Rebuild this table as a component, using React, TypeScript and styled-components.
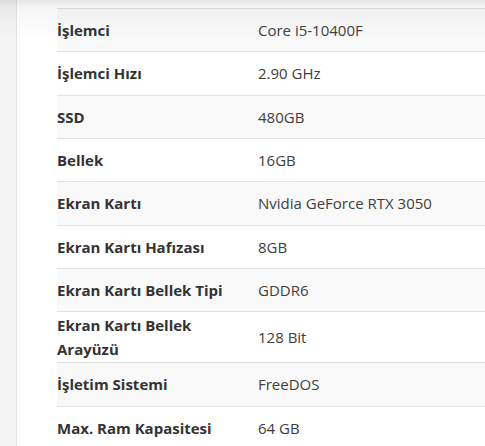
import React from "react";
import styled, { createGlobalStyle } from "styled-components";

const Global = createGlobalStyle`
  html, body { margin: 0; padding: 0; background: #ffffff; }
  body { font-family: "Open Sans", "Noto Sans", "Liberation Sans", sans-serif; }
`;

const Page = styled.div`
  position: relative;
  display: flex;
  width: 485px;
  height: 446px;
  overflow: hidden;
  background: #ffffff;
`;

const Sidebar = styled.div`
  flex: 0 0 16px;
  background: #f4f4f5;
  border-right: 1px solid #e4e4e6;
`;

const Main = styled.div`
  flex: 1;
  padding: 8px 0 0 40px;
  min-width: 0;
`;

const TopShade = styled.div`
  position: absolute;
  left: 0;
  top: 0;
  right: 0;
  height: 40px;
  pointer-events: none;
  background: linear-gradient(
    to bottom,
    rgba(0, 0, 0, 0.1) 0px,
    rgba(0, 0, 0, 0.04) 8px,
    rgba(0, 0, 0, 0.015) 24px,
    rgba(0, 0, 0, 0) 40px
  );
`;

const Table = styled.div`
  border-top: 1px solid #e2e2e2;
  width: 440px;
`;

const Row = styled.div<{ $striped: boolean }>`
  display: grid;
  grid-template-columns: 201px 1fr;
  align-items: center;
  min-height: 43.33px;
  padding: 1px 0;
  box-sizing: border-box;
  border-bottom: 1px solid #e2e2e2;
  background: ${(p) => (p.$striped ? "#f9f9f9" : "#ffffff")};
  font-size: 15px;
  line-height: 24px;
`;

const Label = styled.div`
  font-weight: 700;
  color: #333333;
  padding-right: 14px;
`;

const Value = styled.div`
  color: #404040;
`;

const specs: [string, string][] = [
  ["İşlemci", "Core i5-10400F"],
  ["İşlemci Hızı", "2.90 GHz"],
  ["SSD", "480GB"],
  ["Bellek", "16GB"],
  ["Ekran Kartı", "Nvidia GeForce RTX 3050"],
  ["Ekran Kartı Hafızası", "8GB"],
  ["Ekran Kartı Bellek Tipi", "GDDR6"],
  ["Ekran Kartı Bellek Arayüzü", "128 Bit"],
  ["İşletim Sistemi", "FreeDOS"],
  ["Max. Ram Kapasitesi", "64 GB"],
];

export default function App() {
  return (
    <>
      <Global />
      <Page>
        <Sidebar />
        <Main>
          <Table>
            {specs.map(([k, v], i) => (
              <Row key={k} $striped={i % 2 === 0}>
                <Label>{k}</Label>
                <Value>{v}</Value>
              </Row>
            ))}
          </Table>
        </Main>
        <TopShade />
      </Page>
    </>
  );
}
